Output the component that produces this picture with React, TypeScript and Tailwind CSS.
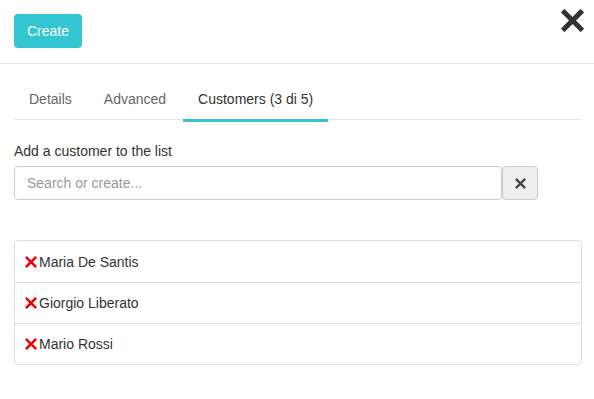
import React from "react";

function XIcon({ size, stroke, color, className }: { size: number; stroke: number; color: string; className?: string }) {
  return (
    <svg width={size} height={size} viewBox="0 0 20 20" className={className}>
      <path d="M3 3 L17 17 M17 3 L3 17" stroke={color} strokeWidth={stroke} strokeLinecap="square" fill="none" />
    </svg>
  );
}

export default function App() {
  const customers = ["Maria De Santis", "Giorgio Liberato", "Mario Rossi"];
  return (
    <div
      className="w-[594px] h-[399px] bg-white text-[14px] leading-[20px] text-[#333] overflow-hidden"
      style={{ fontFamily: '"Liberation Sans", Arial, sans-serif' }}
    >
      <div className="relative h-[64px] border-b border-[#e5e5e5] pl-[14px] pt-[14px]">
        <button className="h-[34px] w-[68px] rounded-[4px] bg-[#33c5d1] text-white text-[14px]">Create</button>
        <div className="absolute top-[9px] right-[10px]">
          <XIcon size={23} stroke={4.4} color="#333" />
        </div>
      </div>
      <div className="pl-[14px] pr-[12px]">
        <div className="mt-[16px] flex border-b border-[#e5e5e5]">
          <div className="-mb-[3px] mr-[2px] px-[15px] pt-[9px] pb-[10px] border-b-[3px] border-transparent text-[#666]">Details</div>
          <div className="-mb-[3px] mr-[2px] px-[15px] pt-[9px] pb-[10px] border-b-[3px] border-transparent text-[#666]">Advanced</div>
          <div className="-mb-[3px] mr-[2px] px-[15px] pt-[9px] pb-[10px] border-b-[3px] border-[#33c5d1] text-[#333]">Customers (3 di 5)</div>
        </div>
        <div className="mt-[21px] text-[#333]">Add a customer to the list</div>
        <div className="mt-[5px] flex">
          <div className="w-[488px] h-[34px] border border-[#ccc] rounded-[4px] flex items-center pl-[12px] text-[#999]">
            Search or create...
          </div>
          <div className="w-[36px] h-[34px] border border-[#ccc] rounded-[4px] bg-[#eee] flex items-center justify-center">
            <XIcon size={11} stroke={4} color="#444" />
          </div>
        </div>
        <div className="mt-[40px] border border-[#ddd] rounded-[4px]">
          {customers.map((c, i) => (
            <div
              key={c}
              className={`h-[41px] flex items-center pl-[10px] ${i > 0 ? "border-t border-[#ddd]" : ""}`}
            >
              <XIcon size={12} stroke={4.2} color="#e00" className="mr-[2px]" />
              <span>{c}</span>
            </div>
          ))}
        </div>
      </div>
    </div>
  );
}
